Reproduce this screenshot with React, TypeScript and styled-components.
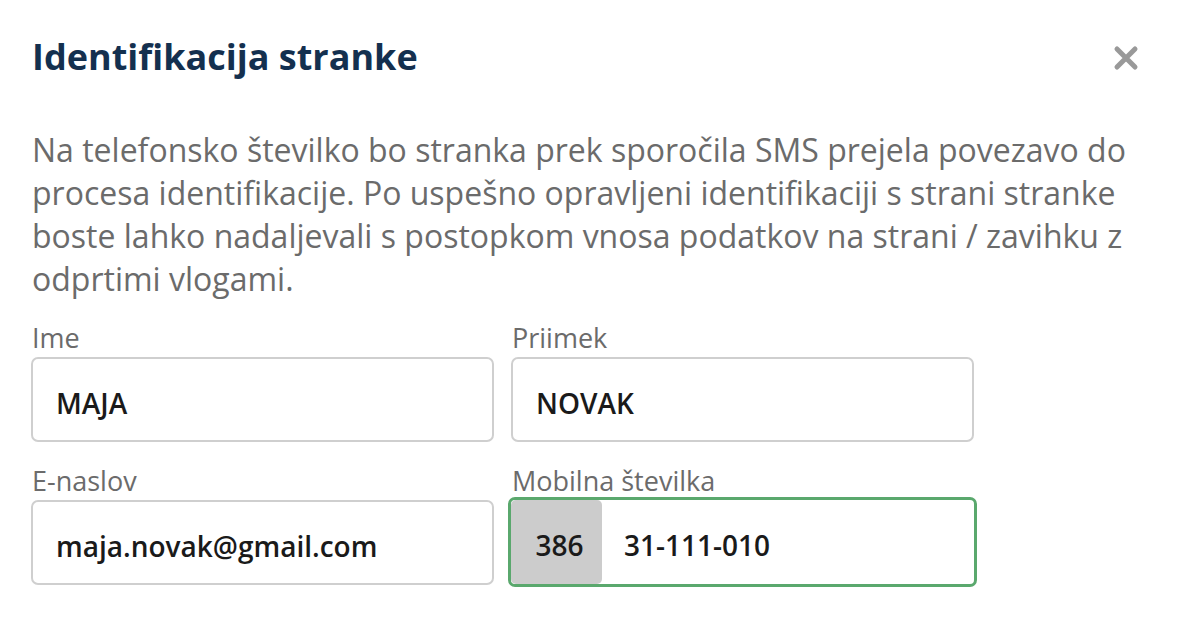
import styled, { createGlobalStyle } from "styled-components";

const GlobalStyle = createGlobalStyle`
  html, body {
    margin: 0;
    padding: 0;
    background: #ffffff;
  }
  body {
    font-family: "Open Sans", "Liberation Sans", sans-serif;
  }
`;

const Dialog = styled.div`
  width: 1180px;
  height: 626px;
  box-sizing: border-box;
  padding: 33px 31px 0 31px;
  background: #fff;
`;

const Header = styled.div`
  display: flex;
  align-items: center;
  justify-content: space-between;
  padding-left: 1px;
`;

const Title = styled.h2`
  margin: 0;
  font-size: 36px;
  line-height: 48px;
  font-weight: 700;
  color: #14304f;
`;

const CloseButton = styled.button`
  border: none;
  background: none;
  padding: 0;
  margin: 2px 9px 0 0;
  width: 28px;
  height: 28px;
  display: flex;
  align-items: center;
  justify-content: center;
  cursor: pointer;
`;

const Intro = styled.p`
  margin: 47px 0 22px 1px;
  font-size: 32px;
  line-height: 43px;
  color: #6b6b6b;
`;

const FormGrid = styled.div`
  display: grid;
  grid-template-columns: 463px 463px;
  column-gap: 17px;
  row-gap: 23px;
`;

const Field = styled.label`
  display: flex;
  flex-direction: column;
`;

const Label = styled.span`
  font-size: 27px;
  line-height: 32px;
  color: #6b6b6b;
  margin: 0 0 3px 1px;
`;

const InputBox = styled.div<{ $active?: boolean }>`
  display: flex;
  align-items: stretch;
  box-sizing: border-box;
  height: ${(p) => (p.$active ? "90px" : "85px")};
  margin: ${(p) => (p.$active ? "-3px" : "0")};
  border: ${(p) => (p.$active ? "3px solid #5aa86d" : "2px solid #cfcfcf")};
  border-radius: 7px;
  background: #fff;
  overflow: hidden;
`;

const Prefix = styled.span`
  display: flex;
  align-items: center;
  justify-content: center;
  width: 91px;
  padding: 6px 0 0 6px;
  box-sizing: border-box;
  background: #cccccc;
  border-radius: 5px;
  font-size: 28px;
  font-weight: 600;
  color: #1a1a1a;
`;

const Input = styled.input<{ $indent?: number }>`
  flex: 1;
  min-width: 0;
  border: none;
  outline: none;
  background: transparent;
  padding: 6px 0 0 ${(p) => p.$indent ?? 23}px;
  font-family: "Open Sans", "Liberation Sans", sans-serif;
  font-size: 28px;
  font-weight: 600;
  color: #1a1a1a;
`;

export default function App() {
  return (
    <>
      <GlobalStyle />
      <Dialog>
        <Header>
          <Title>Identifikacija stranke</Title>
          <CloseButton aria-label="Zapri">
            <svg width="26" height="26" viewBox="0 0 26 26">
              <path
                d="M4 4 L22 22 M22 4 L4 22"
                stroke="#999"
                strokeWidth="5"
                strokeLinecap="round"
              />
            </svg>
          </CloseButton>
        </Header>
        <Intro>
          Na telefonsko številko bo stranka prek sporočila SMS prejela povezavo do
          procesa identifikacije. Po uspešno opravljeni identifikaciji s strani
          stranke boste lahko nadaljevali s postopkom vnosa podatkov na strani /
          zavihku z odprtimi vlogami.
        </Intro>
        <FormGrid>
          <Field>
            <Label>Ime</Label>
            <InputBox>
              <Input defaultValue="MAJA" />
            </InputBox>
          </Field>
          <Field>
            <Label>Priimek</Label>
            <InputBox>
              <Input defaultValue="NOVAK" />
            </InputBox>
          </Field>
          <Field>
            <Label>E-naslov</Label>
            <InputBox>
              <Input defaultValue="maja.novak@gmail.com" />
            </InputBox>
          </Field>
          <Field>
            <Label>Mobilna številka</Label>
            <InputBox $active>
              <Prefix>386</Prefix>
              <Input $indent={22} defaultValue="31-111-010" />
            </InputBox>
          </Field>
        </FormGrid>
      </Dialog>
    </>
  );
}
